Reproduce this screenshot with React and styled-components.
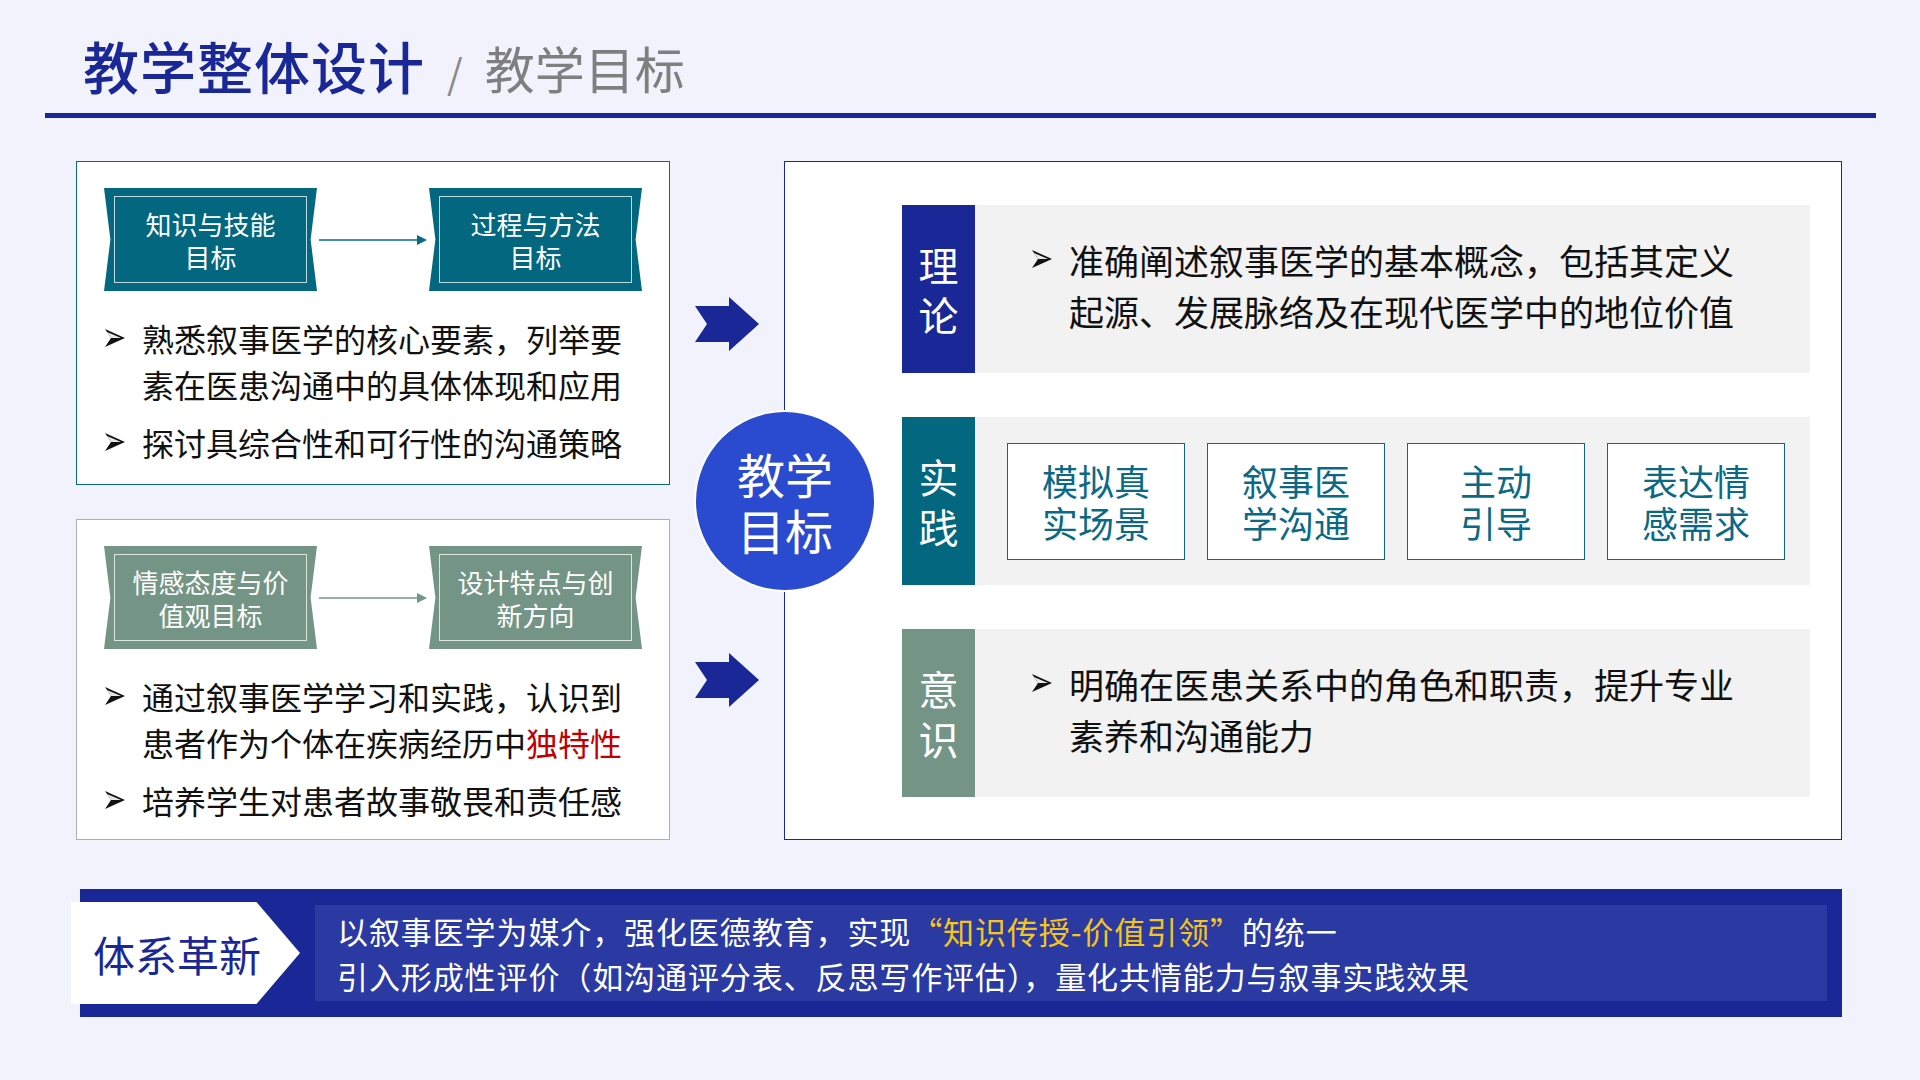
import React from "react";
import styled, { createGlobalStyle } from "styled-components";

const G = createGlobalStyle`
  html,body{margin:0;padding:0;background:#f1f2fc;}
  body{font-family:"Microsoft YaHei","Noto Sans CJK SC","Noto Sans",sans-serif;}
`;
const Page = styled.div`width:1920px;height:1080px;box-sizing:border-box;padding:30px 44px 0 45px;`;
const Header = styled.div`display:flex;align-items:baseline;gap:22px;padding-left:38px;height:83px;border-bottom:5px solid #1a2796;`;
const Title = styled.h1`margin:0;font-size:56px;font-weight:500;color:#1a2796;letter-spacing:1px;line-height:70px;`;
const Slash = styled.span`font-size:40px;color:#8a8a8a;`;
const Sub = styled.span`font-size:50px;color:#7f7f7f;`;
const Main = styled.div`display:flex;margin-top:43px;padding-left:31px;`;
const LeftCol = styled.div`display:flex;flex-direction:column;gap:34px;width:594px;`;
const Card = styled.div`
  background:#fff;border:1.5px solid ${p=>p.$border};height:${p=>p.$h}px;box-sizing:border-box;
  padding:26px 24px 0 27px;
`;
const HeadRow = styled.div`display:flex;align-items:center;`;
const HeadBox = styled.div`
  width:213px;height:103px;background:${p=>p.$bg};box-sizing:border-box;padding:8px 10px;
  clip-path:polygon(0 0,100% 0,97% 50%,100% 100%,0 100%,3% 50%);
  display:flex;
  & > div{flex:1;border:1.5px solid rgba(255,255,255,.75);display:flex;align-items:center;justify-content:center;
  text-align:center;color:#fff;font-size:26px;line-height:33px;}
`;
const Conn = styled.svg`width:112px;height:14px;`;
const Bullets = styled.div`margin-top:24px;display:flex;flex-direction:column;gap:12px;`;
const Bullet = styled.div`display:flex;gap:16px;color:#111;
  font-size:${p=>p.$fs||32}px;line-height:${p=>p.$lh||46}px;`;
const MarkSvg = styled.svg`flex:none;width:22px;height:22px;margin-top:${p=>p.$mt||12}px;`;
const Red = styled.span`color:#c00000;`;
const Mid = styled.div`width:114px;display:flex;flex-direction:column;align-items:center;`;
const Arrow = styled.svg`width:64px;height:54px;margin-top:${p=>p.$mt}px;`;
const Right = styled.div`position:relative;width:1058px;height:679px;box-sizing:border-box;background:#fff;
  border:1.5px solid #1a2796;padding:43px 31px 0 117px;display:flex;flex-direction:column;gap:44px;`;
const Circle = styled.div`position:absolute;left:-89px;top:250px;width:178px;height:178px;border-radius:50%;
  background:#2a4bd0;color:#fff;font-size:48px;line-height:56px;display:flex;align-items:center;justify-content:center;text-align:center;box-shadow:0 0 0 2px #fff;`;
const Row = styled.div`display:flex;height:168px;background:#f2f2f2;`;
const Label = styled.div`width:73px;flex:none;background:${p=>p.$bg};color:#fff;font-size:40px;line-height:50px;
  display:flex;align-items:center;justify-content:center;text-align:center;`;
const RowText = styled.div`display:flex;align-items:center;padding-left:56px;padding-bottom:8px;`;
const Boxes = styled.div`display:flex;gap:22px;align-items:center;padding-left:32px;`;
const PBox = styled.div`width:178px;height:117px;box-sizing:border-box;background:#fff;border:1.5px solid #0a6a86;
  color:#0a6a86;font-size:36px;line-height:42px;display:flex;align-items:center;justify-content:center;text-align:center;`;
const Banner = styled.div`margin:49px 0 0 35px;width:1762px;height:128px;background:#1a2796;display:flex;align-items:center;`;
const Tag = styled.div`margin-left:-9px;width:229px;height:102px;background:#fff;color:#1a2796;font-size:42px;
  display:flex;align-items:center;padding-left:22px;box-sizing:border-box;
  clip-path:polygon(0 0,81% 0,100% 50%,81% 100%,0 100%);`;
const Inner = styled.div`margin-left:15px;width:1512px;height:96px;background:#2b3aa3;color:#fff;font-size:31px;line-height:45px;
  letter-spacing:0.9px;padding-left:22px;box-sizing:border-box;display:flex;flex-direction:column;justify-content:center;`;
const Yellow = styled.span`color:#f5c518;`;

const Chev = ({mt})=> (
  <MarkSvg $mt={mt} viewBox="0 0 22 22"><polygon points="1,2 21,11 1,20 7,11" fill="#111"/><polygon points="3,5 17,11 7,11" fill="#fff" opacity="0.9"/></MarkSvg>
);
const BigArrow = ({mt})=>(
  <Arrow $mt={mt} viewBox="0 0 64 54"><polygon points="0,9 34,9 34,0 64,27 34,54 34,45 0,45 12,27" fill="#1a2796"/></Arrow>
);
const Connector = ({c})=>(
  <Conn viewBox="0 0 112 14"><line x1="2" y1="7" x2="100" y2="7" stroke={c} strokeWidth="1.5"/><polygon points="100,2 110,7 100,12" fill={c}/></Conn>
);

export default function App(){
  return (<Page><G/>
    <Header><Title>教学整体设计</Title><Slash>/</Slash><Sub>教学目标</Sub></Header>
    <Main>
      <LeftCol>
        <Card $border="#0a6a86" $h={324}>
          <HeadRow>
            <HeadBox $bg="#02677f"><div>知识与技能<br/>目标</div></HeadBox>
            <Connector c="#0a6a86"/>
            <HeadBox $bg="#02677f"><div>过程与方法<br/>目标</div></HeadBox>
          </HeadRow>
          <Bullets>
            <Bullet><Chev/><span>熟悉叙事医学的核心要素，列举要素在医患沟通中的具体体现和应用</span></Bullet>
            <Bullet><Chev/><span>探讨具综合性和可行性的沟通策略</span></Bullet>
          </Bullets>
        </Card>
        <Card $border="#a8b3ad" $h={321}>
          <HeadRow>
            <HeadBox $bg="#749585"><div>情感态度与价<br/>值观目标</div></HeadBox>
            <Connector c="#749585"/>
            <HeadBox $bg="#749585"><div>设计特点与创<br/>新方向</div></HeadBox>
          </HeadRow>
          <Bullets>
            <Bullet><Chev/><span>通过叙事医学学习和实践，认识到患者作为个体在疾病经历中<Red>独特性</Red></span></Bullet>
            <Bullet><Chev/><span>培养学生对患者故事敬畏和责任感</span></Bullet>
          </Bullets>
        </Card>
      </LeftCol>
      <Mid><BigArrow mt={136}/><BigArrow mt={302}/></Mid>
      <Right>
        <Circle>教学<br/>目标</Circle>
        <Row>
          <Label $bg="#1a2796">理<br/>论</Label>
          <RowText><Bullet $fs={35} $lh={51}><Chev mt={14}/><span>准确阐述叙事医学的基本概念，包括其定义<br/>起源、发展脉络及在现代医学中的地位价值</span></Bullet></RowText>
        </Row>
        <Row>
          <Label $bg="#02677f">实<br/>践</Label>
          <Boxes>
            <PBox>模拟真<br/>实场景</PBox>
            <PBox>叙事医<br/>学沟通</PBox>
            <PBox>主动<br/>引导</PBox>
            <PBox>表达情<br/>感需求</PBox>
          </Boxes>
        </Row>
        <Row>
          <Label $bg="#749585">意<br/>识</Label>
          <RowText><Bullet $fs={35} $lh={51}><Chev mt={14}/><span>明确在医患关系中的角色和职责，提升专业<br/>素养和沟通能力</span></Bullet></RowText>
        </Row>
      </Right>
    </Main>
    <Banner>
      <Tag>体系革新</Tag>
      <Inner>
        <div>以叙事医学为媒介，强化医德教育，实现<Yellow>“知识传授-价值引领”</Yellow>的统一</div>
        <div>引入形成性评价（如沟通评分表、反思写作评估），量化共情能力与叙事实践效果</div>
      </Inner>
    </Banner>
  </Page>);
}
